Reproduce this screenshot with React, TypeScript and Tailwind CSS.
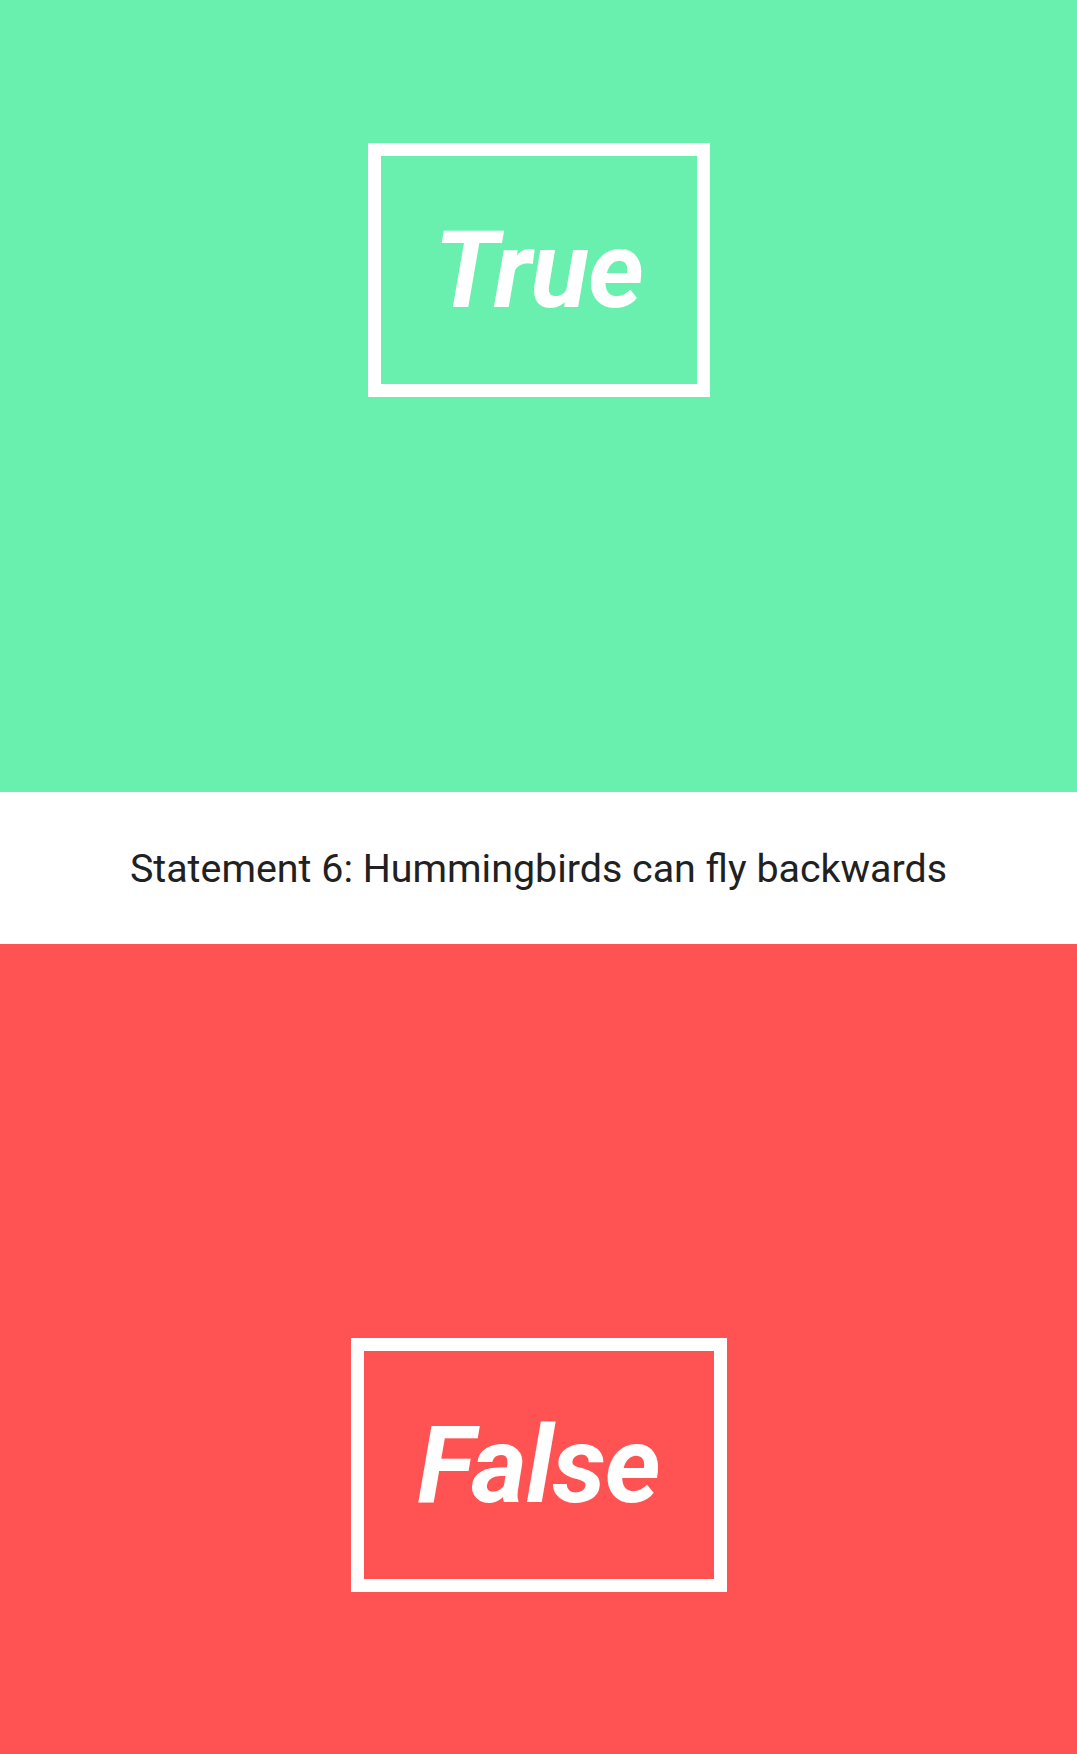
import React from 'react';

const AnswerBox: React.FC<{ label: string; width: string }> = ({ label, width }) => (
  <div
    className={`${width} h-[254px] border-[13px] border-white flex items-center justify-center`}
  >
    <span className="text-white text-[107px] font-bold italic leading-none tracking-[-1px]">
      {label}
    </span>
  </div>
);

const App: React.FC = () => {
  return (
    <div className="w-full min-h-screen flex flex-col font-['Roboto',sans-serif]">
      <div className="h-[792px] bg-[#69F0AE] flex flex-col items-center pt-[143px]">
        <AnswerBox label="True" width="w-[342px]" />
      </div>
      <div className="h-[152px] bg-white flex items-center justify-center">
        <p className="text-[39.4px] text-[#212121] pt-[2px]">
          Statement 6: Hummingbirds can fly backwards
        </p>
      </div>
      <div className="h-[810px] bg-[#FF5252] flex flex-col items-center pt-[394px]">
        <AnswerBox label="False" width="w-[376px]" />
      </div>
    </div>
  );
};

export default App;
